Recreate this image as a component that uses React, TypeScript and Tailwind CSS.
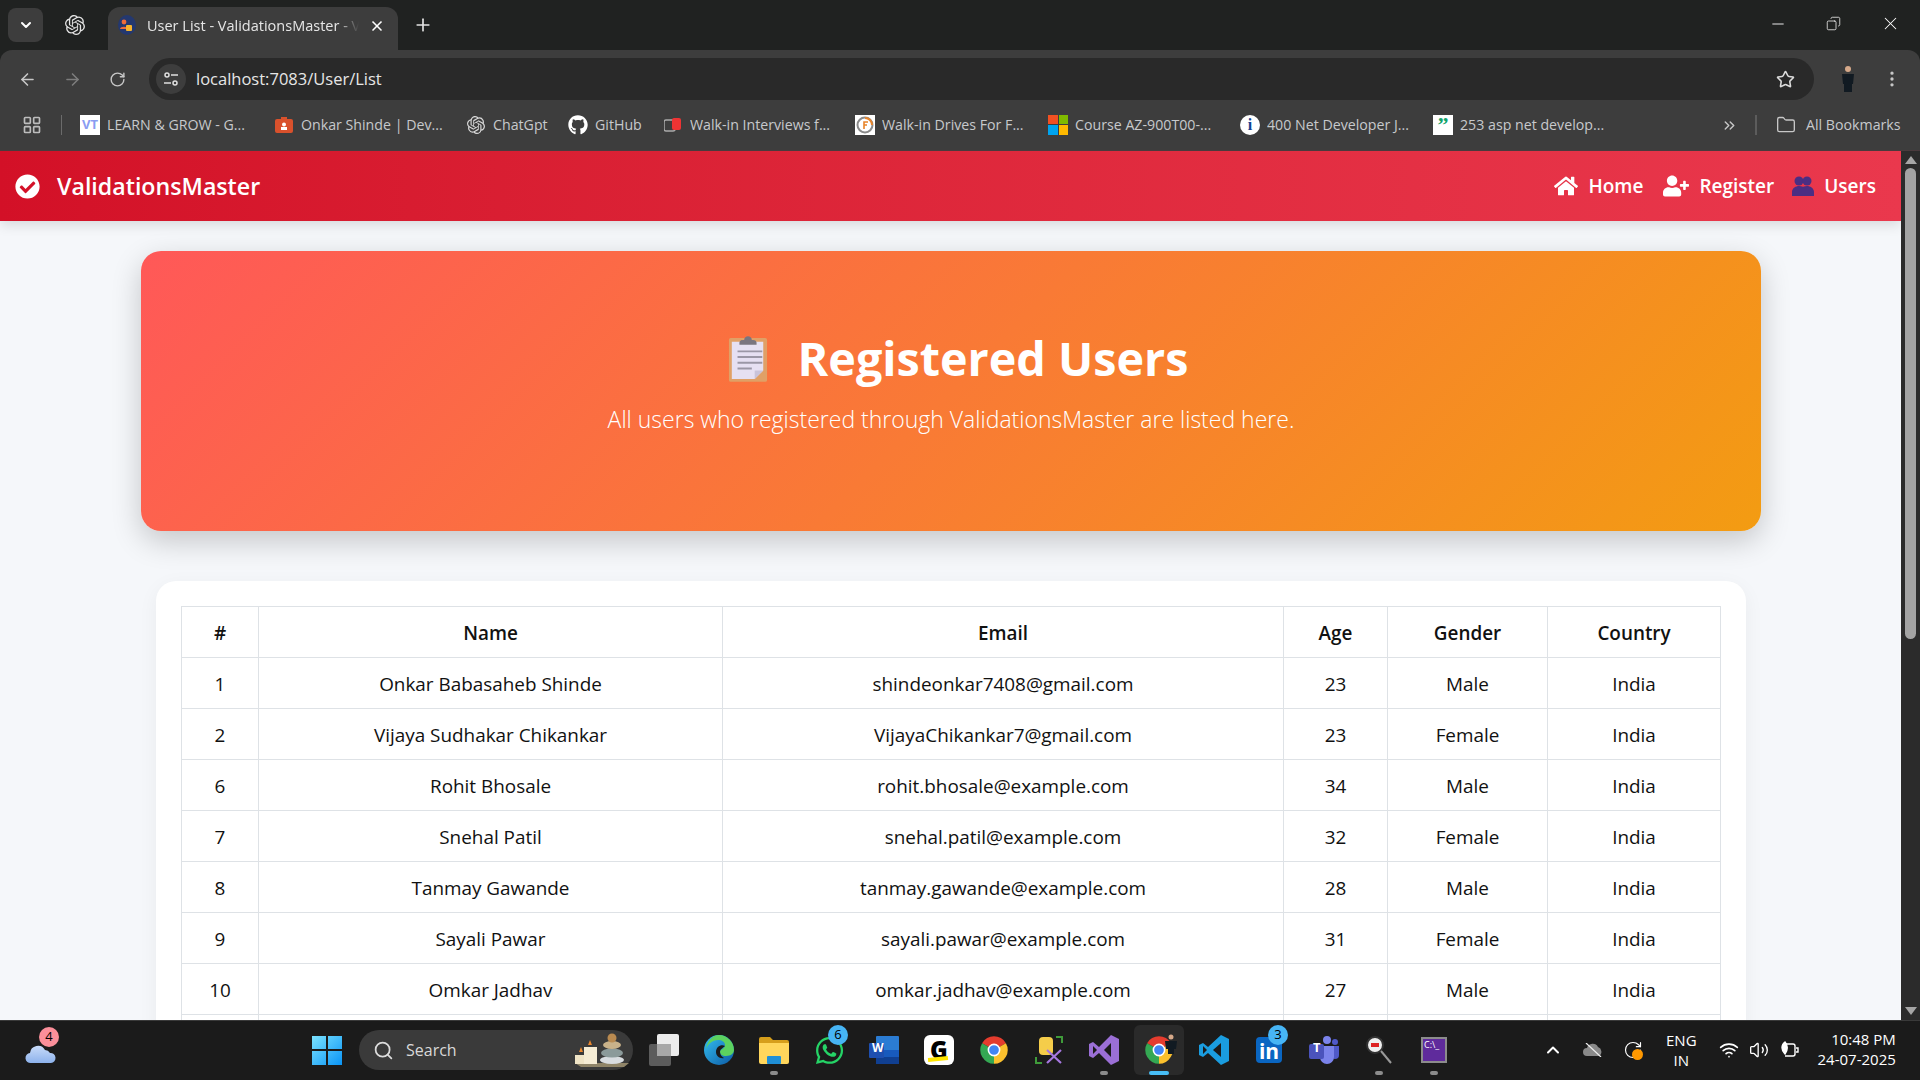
import { ArrowLeft, ArrowRight, ChevronDown, ChevronUp, ChevronsRight, Copy, Folder, LayoutGrid, Minus, MoreVertical, Plus, RotateCw, Search, Star, Volume2, Wifi, X } from 'lucide-react'
import { FaCheckCircle, FaGithub, FaHome, FaUserPlus, FaWhatsapp } from 'react-icons/fa'
import { SiOpenai } from 'react-icons/si'

const USERS = [
  { id: 1, name: 'Onkar Babasaheb Shinde', email: 'shindeonkar7408@gmail.com', age: 23, gender: 'Male' },
  { id: 2, name: 'Vijaya Sudhakar Chikankar', email: 'VijayaChikankar7@gmail.com', age: 23, gender: 'Female' },
  { id: 6, name: 'Rohit Bhosale', email: 'rohit.bhosale@example.com', age: 34, gender: 'Male' },
  { id: 7, name: 'Snehal Patil', email: 'snehal.patil@example.com', age: 32, gender: 'Female' },
  { id: 8, name: 'Tanmay Gawande', email: 'tanmay.gawande@example.com', age: 28, gender: 'Male' },
  { id: 9, name: 'Sayali Pawar', email: 'sayali.pawar@example.com', age: 31, gender: 'Female' },
  { id: 10, name: 'Omkar Jadhav', email: 'omkar.jadhav@example.com', age: 27, gender: 'Male' },
]

const Chrome = ({ size = 30 }: { size?: number }) => (
  <svg width={size} height={size} viewBox="0 0 48 48">
    <path d="M24 24L43.05 13A22 22 0 0 0 4.95 13Z" fill="#e53c2e" />
    <path d="M24 24L24 46A22 22 0 0 0 43.05 13Z" fill="#fbc02d" />
    <path d="M24 24L4.95 13A22 22 0 0 0 24 46Z" fill="#34a853" />
    <circle cx="24" cy="24" r="9" fill="#4285f4" stroke="#fff" strokeWidth="2.5" />
  </svg>
)

function Bookmark({ width, icon, label }: { width: string; icon: React.ReactNode; label: string }) {
  return (
    <div className={`flex shrink-0 items-center gap-[7px] ${width}`}>
      <span className="flex h-5 w-5 shrink-0 items-center justify-center">{icon}</span>
      <span className="truncate text-[14.2px] text-[#c7c9cc]">{label}</span>
    </div>
  )
}

function TaskIcon({ children, dot, active }: { children: React.ReactNode; dot?: boolean; active?: boolean }) {
  return (
    <div className={`relative flex h-[50px] w-[50px] items-center justify-center rounded-md ${active ? 'bg-[#2a2a2a]' : ''}`}>
      {children}
      {dot && <span className="absolute bottom-0 left-[21px] h-[4px] w-[8px] rounded-full bg-[#8c8c8c]" />}
      {active && <span className="absolute bottom-0 left-[15px] h-[4px] w-[20px] rounded-full bg-[#47bdf5]" />}
    </div>
  )
}

function Badge({ children, className }: { children: React.ReactNode; className: string }) {
  return <span className={`absolute flex h-[20px] w-[20px] items-center justify-center rounded-full text-[13px] text-black ${className}`}>{children}</span>
}

function TabStrip() {
  return (
    <div className="flex h-[50px] items-end bg-[#202221] pl-2">
      <div className="mb-[8px] flex h-[34px] w-[35px] items-center justify-center rounded-lg bg-[#3d3d3d] text-white"><ChevronDown size={16} strokeWidth={3} /></div>
      <div className="mb-[15px] ml-[22px] text-[#e4e4e4]"><SiOpenai size={20} /></div>
      <div className="ml-[23px] flex h-[43px] w-[290px] items-center rounded-t-xl bg-[#3d3d3d] pb-[6px] pl-[10px]">
        <svg width="18" height="22" viewBox="0 0 18 22" className="shrink-0">
          <ellipse cx="9" cy="10" rx="9" ry="10" fill="#24386f" />
          <circle cx="6" cy="7" r="2.4" fill="#ee6c3a" />
          <path d="M2 14c0-3 8-3 8 0z" fill="#ee6c3a" />
          <rect x="8" y="10" width="6" height="6" rx="1" fill="#f7b42c" />
        </svg>
        <span className="ml-[11px] w-[212px] overflow-hidden whitespace-nowrap text-[14.5px] text-[#e6e6e6] [mask-image:linear-gradient(to_right,#000_90%,transparent)]">User List - ValidationsMaster - V</span>
        <X size={16} strokeWidth={2.5} className="ml-[10px] text-white" />
      </div>
      <Plus size={20} strokeWidth={2} className="mb-[15px] ml-[15px] text-[#e4e4e4]" />
      <div className="mb-[16px] ml-auto flex items-center text-white">
        <Minus size={18} strokeWidth={1.2} className="mr-[39px]" />
        <Copy size={15} strokeWidth={1.2} className="mr-[39px] -scale-x-100" />
        <X size={21} strokeWidth={1.2} className="mr-[19px]" />
      </div>
    </div>
  )
}

function Toolbar() {
  return (
    <div className="flex h-[50px] items-center rounded-t-xl bg-[#3d3d3d] pl-[18px] pt-[8px] text-[#c7c7c7]">
      <ArrowLeft size={19} />
      <ArrowRight size={19} className="ml-[26px] text-[#7d7d7d]" />
      <RotateCw size={17} className="ml-[27px]" />
      <div className="ml-[23px] flex h-[42px] w-[1665px] items-center rounded-full bg-[#292929] pl-[7px] pr-[19px]">
        <span className="flex h-[30px] w-[30px] items-center justify-center rounded-full bg-[#3d3d3d]">
          <svg width="18" height="16" viewBox="0 0 18 16" fill="none" stroke="#e0e0e0" strokeWidth="1.5">
            <circle cx="5" cy="4" r="2" /><path d="M9 4h7M2 12h7" /><circle cx="13" cy="12" r="2" />
          </svg>
        </span>
        <span className="ml-[10px] text-[16.5px] text-[#e6e6e6]">localhost:7083/User/List</span>
        <Star size={19} className="ml-auto text-[#dcdcdc]" />
      </div>
      <svg width="14" height="28" viewBox="0 0 14 28" className="ml-[27px]">
        <circle cx="7" cy="4" r="3" fill="#d6a98a" />
        <path d="M1 9h12l-1 10h-1v8H3v-8H2z" fill="#111a22" />
      </svg>
      <MoreVertical size={20} className="ml-[27px]" />
    </div>
  )
}

function BookmarksBar() {
  return (
    <div className="flex h-[51px] items-center border-b border-[#4a3a3d] bg-[#3d3d3d] pl-[22px]">
      <LayoutGrid size={20} className="shrink-0 text-[#bdbdbd]" />
      <span className="ml-[19px] mr-[18px] h-[20px] w-[1px] shrink-0 bg-[#6b6b6b]" />
      <Bookmark width="w-[194px]" label="LEARN & GROW - G..." icon={<span className="flex h-5 w-5 items-center justify-center bg-white text-[13px] font-bold text-[#8a9cf2]">VT</span>} />
      <Bookmark width="w-[192px]" label="Onkar Shinde | Dev..." icon={<svg width="18" height="18" viewBox="0 0 18 18"><rect y="3" width="18" height="14" rx="2" fill="#d9512c" /><rect x="6" y="1" width="6" height="3" fill="#d9512c" /><circle cx="9" cy="8.5" r="2" fill="#fff" /><rect x="6" y="11" width="6" height="3" fill="#fff" /></svg>} />
      <Bookmark width="w-[102px]" label="ChatGpt" icon={<SiOpenai size={18} className="text-[#d8d8d8]" />} />
      <Bookmark width="w-[95px]" label="GitHub" icon={<FaGithub size={20} className="text-white" />} />
      <Bookmark width="w-[192px]" label="Walk-in Interviews f..." icon={<svg width="18" height="20" viewBox="0 0 18 20"><rect y="5" width="11" height="11" rx="2" fill="none" stroke="#aaa" strokeWidth="1.5" /><rect x="8" y="3" width="9" height="12" rx="2" fill="#e33" /></svg>} />
      <Bookmark width="w-[193px]" label="Walk-in Drives For F..." icon={<span className="flex h-5 w-5 items-center justify-center bg-white"><svg width="18" height="18" viewBox="0 0 18 18" fill="none"><circle cx="9" cy="9" r="7.5" stroke="#8a8a8a" strokeWidth="2" /><path d="M9 2a7 7 0 0 1 7 7" stroke="#e8842a" strokeWidth="2" /><path d="M8 13V6h4M8 9h3" stroke="#e8842a" strokeWidth="1.6" /></svg></span>} />
      <Bookmark width="w-[192px]" label="Course AZ-900T00-..." icon={<span className="grid h-5 w-5 grid-cols-2 gap-[1px]"><i className="bg-[#f25022]" /><i className="bg-[#7fba00]" /><i className="bg-[#00a4ef]" /><i className="bg-[#ffb900]" /></span>} />
      <Bookmark width="w-[193px]" label="400 Net Developer J..." icon={<span className="flex h-5 w-5 items-center justify-center rounded-full bg-white font-['Liberation_Serif',serif] text-[16px] font-bold text-[#12408f]">i</span>} />
      <Bookmark width="w-[288px]" label="253 asp net develop..." icon={<span className="flex h-5 w-5 items-center justify-center bg-white font-['Liberation_Serif',serif] text-[22px] font-bold leading-[28px] text-[#0fa36b]">”</span>} />
      <ChevronsRight size={17} className="shrink-0 text-[#c7c7c7]" />
      <span className="ml-[17px] mr-[12px] h-[20px] w-[2px] shrink-0 bg-[#5c5c5c]" />
      <Folder size={20} strokeWidth={1.6} className="ml-[7px] shrink-0 text-[#c7c7c7]" />
      <span className="ml-[10px] whitespace-nowrap text-[14.2px] text-[#c7c9cc]">All Bookmarks</span>
    </div>
  )
}

function Scrollbar() {
  return (
    <div className="flex w-[19px] shrink-0 flex-col items-center bg-[#2b2b2b] pt-[5px]">
      <span className="h-0 w-0 border-x-[6px] border-b-[8px] border-x-transparent border-b-[#a6a6a6]" />
      <span className="mt-[4px] h-[471px] w-[11px] rounded-full bg-[#a3a3a3]" />
      <span className="mt-auto mb-[5px] h-0 w-0 border-x-[6px] border-t-[8px] border-x-transparent border-t-[#a6a6a6]" />
    </div>
  )
}

function NavLink({ icon, label, className }: { icon: React.ReactNode; label: string; className: string }) {
  return (
    <div className={`flex items-center ${className}`}>
      {icon}
      <span className="ml-[10px] text-[19px] font-semibold text-white">{label}</span>
    </div>
  )
}

function Navbar() {
  return (
    <nav className="relative flex h-[70px] items-center bg-gradient-to-r from-[#d31027] to-[#ea384d] pl-[15px] pr-[25px] shadow-[0_4px_12px_rgba(0,0,0,0.12)]">
      <FaCheckCircle size={25} className="text-white" />
      <span className="ml-[17px] pt-[1px] text-[23.2px] font-semibold text-white">ValidationsMaster</span>
      <div className="ml-auto flex items-center">
        <NavLink icon={<FaHome size={24} className="text-white" />} label="Home" className="" />
        <NavLink icon={<FaUserPlus size={26} className="text-white" />} label="Register" className="ml-[20px]" />
        <NavLink
          label="Users"
          className="ml-[18px]"
          icon={
            <svg width="22" height="20" viewBox="0 0 22 20" fill="#4b2e83">
              <circle cx="7" cy="5" r="4.5" />
              <circle cx="15" cy="5" r="4.5" />
              <path d="M0 20v-4c0-4 4-6 7-6s4 1 4 1 1-1 4-1 7 2 7 6v4z" />
            </svg>
          }
        />
      </div>
    </nav>
  )
}

function Hero() {
  return (
    <section className="ml-[141px] mr-[140px] mt-[30px] flex h-[280px] flex-col items-center justify-center rounded-[20px] bg-[linear-gradient(135deg,#ff5858,#f39c12)] pb-[17px] text-white shadow-[0_10px_30px_rgba(0,0,0,0.2)]">
      <div className="ml-[15px] flex items-center">
        <svg width="40" height="48" viewBox="0 0 42 50">
          <rect x="1" y="4" width="40" height="46" rx="2" fill="#e0a066" />
          <path d="M4 8h33v30l-9 9H4z" fill="#e6e0f2" />
          <path d="M28 47v-9h9z" fill="#c9c3da" />
          <path d="M12 9c0-3 3-3 5-3 0-5 8-5 8 0 2 0 5 0 5 3v2H12z" fill="#7a7580" />
          <path d="M10 18h26M10 24h26M10 30h26M10 36h15" stroke="#9b97a6" strokeWidth="2" />
        </svg>
        <h1 className="ml-[29px] text-[46.7px] font-bold leading-[60px]">Registered Users</h1>
      </div>
      <p className="mt-[13px] text-[23px] font-light leading-[36px]">All users who registered through ValidationsMaster are listed here.</p>
    </section>
  )
}

function UsersTable() {
  const cell = 'border border-[#dee2e6] pt-[2px] text-center align-middle'
  return (
    <section className="ml-[156px] mr-[155px] mt-[50px] rounded-[20px] bg-white py-[25px] pl-[25px] pr-[26px] shadow-[0_5px_20px_rgba(0,0,0,0.05)]">
      <table className="w-full table-fixed border-collapse text-[18.9px] text-[#111]">
        <colgroup>
          <col className="w-[77px]" />
          <col className="w-[464px]" />
          <col className="w-[561px]" />
          <col className="w-[104px]" />
          <col className="w-[160px]" />
          <col className="w-[173px]" />
        </colgroup>
        <thead>
          <tr className="h-[51px] font-semibold">
            {['#', 'Name', 'Email', 'Age', 'Gender', 'Country'].map((head) => <th key={head} className={`${cell} font-semibold`}>{head}</th>)}
          </tr>
        </thead>
        <tbody>
          {USERS.map((user) => (
            <tr key={user.id} className="h-[51px]">
              <td className={cell}>{user.id}</td>
              <td className={cell}>{user.name}</td>
              <td className={cell}>{user.email}</td>
              <td className={cell}>{user.age}</td>
              <td className={cell}>{user.gender}</td>
              <td className={cell}>India</td>
            </tr>
          ))}
          <tr className="h-[51px]">
            {[0, 1, 2, 3, 4, 5].map((n) => <td key={n} className={cell} />)}
          </tr>
        </tbody>
      </table>
    </section>
  )
}

function Taskbar() {
  return (
    <footer className="relative flex h-[60px] shrink-0 items-center border-t border-[#3a3a3a] bg-[#1b1b1b] pb-[1px] text-white">
      <div className="relative ml-[25px] w-[31px]">
        <svg width="31" height="22" viewBox="0 0 31 22" className="mt-[6px]">
          <defs><linearGradient id="cloud" x1="0" y1="0" x2="0" y2="1"><stop offset="0" stopColor="#c8dbf9" /><stop offset="1" stopColor="#8db2ec" /></linearGradient></defs>
          <path d="M6 21a5 5 0 0 1-1-10 8 8 0 0 1 15-3 6 6 0 0 1 5 3 5 5 0 0 1 1 10z" fill="url(#cloud)" />
        </svg>
        <Badge className="left-[14px] top-[-9px] bg-[#fb8f9a]">4</Badge>
      </div>
      <svg width="30" height="30" viewBox="0 0 30 30" className="ml-[256px]">
        <defs><linearGradient id="win" x1="0" y1="0" x2="1" y2="1"><stop offset="0" stopColor="#7be3ff" /><stop offset="1" stopColor="#0a94f5" /></linearGradient></defs>
        <path d="M0 1h14v13H0zM16 1h14v13H16zM0 16h14v14H0zM16 16h14v14H16z" fill="url(#win)" />
      </svg>
      <div className="ml-[17px] flex h-[40px] w-[274px] items-center rounded-full bg-[#3a3a3a] pl-[14px]">
        <Search size={21} className="text-[#dcdcdc]" />
        <span className="ml-[12px] text-[16px] text-[#d8d8d8]">Search</span>
        <svg width="58" height="34" viewBox="0 0 58 34" className="ml-auto mr-[2px]">
          <path d="M2 30h54l-5 4H8z" fill="#8f8468" />
          <rect x="2" y="22" width="12" height="9" fill="#efe4c6" />
          <rect x="11" y="14" width="13" height="17" fill="#f5ecd4" />
          <path d="M17 7l2 5h-4zM8 14l2 5H6z" fill="#e8862d" />
          <ellipse cx="39" cy="27" rx="12" ry="4" fill="#d8dce0" />
          <ellipse cx="39" cy="20" rx="11" ry="4.5" fill="#8b9a9a" />
          <ellipse cx="39" cy="12" rx="9" ry="4" fill="#c9b28a" />
          <circle cx="39" cy="5" r="4.5" fill="#b98a50" />
        </svg>
      </div>
      <div className="ml-[6px] flex gap-[5px]">
        <TaskIcon>
          <svg width="30" height="32" viewBox="0 0 30 32"><rect y="10" width="22" height="22" rx="2" fill="#5c5c5c" /><rect x="8" y="0" width="22" height="22" rx="2" fill="#ececec" /><rect x="8" y="10" width="14" height="12" fill="#a8a8a8" /></svg>
        </TaskIcon>
        <TaskIcon>
          <svg width="30" height="30" viewBox="0 0 30 30">
            <defs><linearGradient id="edge" x1="0" y1="0" x2="1" y2="1"><stop offset="0" stopColor="#35c1f1" /><stop offset="1" stopColor="#0c59a4" /></linearGradient></defs>
            <circle cx="15" cy="15" r="15" fill="url(#edge)" />
            <path d="M30 15c0 3-3 6-8 6-4 0-6-2-6-4 0-3 5-3 5-7 0-3-3-5-7-5S4 8 2 14C3 6 9 0 15 0c8 0 15 7 15 15z" fill="#5cd25f" />
            <path d="M21 11c-4-2-9 1-9 6 0 4 4 7 8 6-2-1-4-3-4-6 0-3 3-4 5-6z" fill="#1b1b1b" />
          </svg>
        </TaskIcon>
        <TaskIcon dot>
          <svg width="30" height="28" viewBox="0 0 30 28"><path d="M0 3a2 2 0 0 1 2-2h9l3 3h14a2 2 0 0 1 2 2v4H0z" fill="#d69e1b" /><path d="M0 7h30v19a2 2 0 0 1-2 2H2a2 2 0 0 1-2-2z" fill="#ffd65c" /><rect x="8" y="20" width="14" height="8" rx="1" fill="#1f8fd6" /></svg>
        </TaskIcon>
        <TaskIcon>
          <FaWhatsapp size={31} className="text-[#25d366]" />
          <Badge className="left-[24px] top-[0px] bg-[#47b5f5]">6</Badge>
        </TaskIcon>
        <TaskIcon>
          <svg width="30" height="28" viewBox="0 0 30 28"><rect x="7" width="23" height="28" rx="1" fill="#2b7cd3" /><rect x="7" y="14" width="23" height="7" fill="#185abd" /><rect x="7" y="21" width="23" height="7" fill="#103f91" /><rect y="7" width="15" height="15" rx="1" fill="#1e4fb0" /></svg>
          <span className="absolute left-[13px] top-[17px] text-[12px] font-bold leading-none text-white">W</span>
        </TaskIcon>
        <TaskIcon>
          <span className="flex h-[30px] w-[30px] items-center justify-center rounded-md bg-white text-[24px] font-black leading-none text-black">G</span>
          <span className="absolute left-[14px] top-[32px] h-[4px] w-[20px] -rotate-6 bg-[#ffe600]" />
        </TaskIcon>
        <TaskIcon><Chrome /></TaskIcon>
        <TaskIcon>
          <svg width="30" height="30" viewBox="0 0 30 30" fill="none">
            <rect x="5" y="2" width="14" height="18" rx="4" fill="#f5cd4a" />
            <path d="M22 2h6v6M2 22v6h6" stroke="#3f9b3a" strokeWidth="2" />
            <path d="M13 28l14-13M27 28L13 15" stroke="#a678e0" strokeWidth="2.2" />
          </svg>
        </TaskIcon>
        <TaskIcon dot>
          <svg width="30" height="30" viewBox="0 0 30 30"><path d="M22 0l8 4v22l-8 4-12-12-6 5-4-2V9l4-2 6 5z" fill="#9b6fd6" /><path d="M22 8l-7 7 7 7z" fill="#1b1b1b" /><path d="M4 11v8l4-4z" fill="#1b1b1b" /></svg>
        </TaskIcon>
        <TaskIcon active>
          <Chrome />
          <svg width="12" height="20" viewBox="0 0 12 20" className="absolute left-[31px] top-[9px]"><circle cx="6" cy="3" r="2.5" fill="#d6a98a" /><path d="M0 7h12l-1 8H9v5H3v-5H1z" fill="#111a22" /></svg>
        </TaskIcon>
        <TaskIcon>
          <svg width="30" height="30" viewBox="0 0 30 30"><path d="M22 0l8 4v22l-8 4L9 18l-5 4-4-2v-10l4-2 5 4z" fill="#1a9de0" /><path d="M22 8l-8 7 8 7z" fill="#1b1b1b" /><path d="M4 11v8l4-4z" fill="#1b1b1b" /></svg>
        </TaskIcon>
        <TaskIcon>
          <span className="flex h-[26px] w-[26px] items-end justify-center rounded-sm bg-[#0a66c2] text-[21px] font-bold leading-[24px] text-white">in</span>
          <Badge className="left-[24px] top-[0px] bg-[#47b5f5]">3</Badge>
        </TaskIcon>
        <TaskIcon>
          <svg width="30" height="28" viewBox="0 0 30 28"><circle cx="18" cy="4" r="4" fill="#7b83eb" /><circle cx="26" cy="6" r="3" fill="#5059c9" /><path d="M22 10h8v9a4 4 0 0 1-8 0z" fill="#5059c9" /><path d="M8 10h17v11a7 7 0 0 1-14 0z" fill="#7b83eb" /><rect y="8" width="15" height="15" rx="2" fill="#4b53bc" /></svg>
          <span className="absolute left-[14px] top-[16px] text-[13px] font-bold leading-none text-white">T</span>
        </TaskIcon>
        <TaskIcon dot>
          <svg width="26" height="30" viewBox="0 0 26 30" fill="none"><circle cx="9" cy="10" r="8" fill="#eee" stroke="#333" strokeWidth="2" /><rect x="5" y="8" width="8" height="4" fill="#d22" /><path d="M15 16l10 12" stroke="#999" strokeWidth="2" /></svg>
        </TaskIcon>
        <TaskIcon dot>
          <span className="flex h-[26px] w-[26px] items-start border-2 border-[#8c8c8c] bg-[#5f2b9c] pl-[1px] text-[9px] leading-[12px] text-white">C:\_</span>
        </TaskIcon>
      </div>
      <div className="ml-[84px] flex items-center">
        <ChevronUp size={20} strokeWidth={2.4} />
        <svg width="20" height="14" viewBox="0 0 20 14" className="ml-[20px]"><path d="M4 13a4 4 0 0 1 0-8 6 6 0 0 1 11-1 5 5 0 0 1 1 9z" fill="#8a8a8a" /><path d="M3 0l15 14" stroke="#eee" strokeWidth="1.2" /></svg>
        <span className="relative ml-[20px]">
          <RotateCw size={20} strokeWidth={1.4} />
          <span className="absolute left-[9px] top-[9px] h-[11px] w-[11px] rounded-full bg-[#ff9800]" />
        </span>
        <div className="ml-[23px] text-center text-[15px] leading-[20px]">ENG<br />IN</div>
        <Wifi size={20} className="ml-[22px]" />
        <Volume2 size={20} strokeWidth={1.6} className="ml-[10px]" />
        <svg width="20" height="20" viewBox="0 0 20 20" fill="none" stroke="#fff" strokeWidth="1.4" className="ml-[10px]"><path d="M6 4h8a2 2 0 0 1 2 2v8a2 2 0 0 1-2 2H6" /><path d="M17 8h2v4h-2" /><path d="M6 2c-4 3-4 8 0 12 3-4 3-9 0-12z" fill="#fff" /></svg>
        <div className="ml-[19px] pb-[2px] text-right text-[15px] leading-[20px]">10:48 PM<br />24-07-2025</div>
      </div>
    </footer>
  )
}

export default function App() {
  return (
    <div className="flex h-screen w-[1920px] flex-col overflow-hidden bg-[#f5f7fa] font-['Open_Sans',sans-serif]">
      <div className="shrink-0 bg-[#202221]">
        <TabStrip />
        <Toolbar />
        <BookmarksBar />
      </div>
      <div className="flex min-h-0 flex-1">
        <main className="min-w-0 flex-1 overflow-hidden">
          <Navbar />
          <Hero />
          <UsersTable />
        </main>
        <Scrollbar />
      </div>
      <Taskbar />
    </div>
  )
}
